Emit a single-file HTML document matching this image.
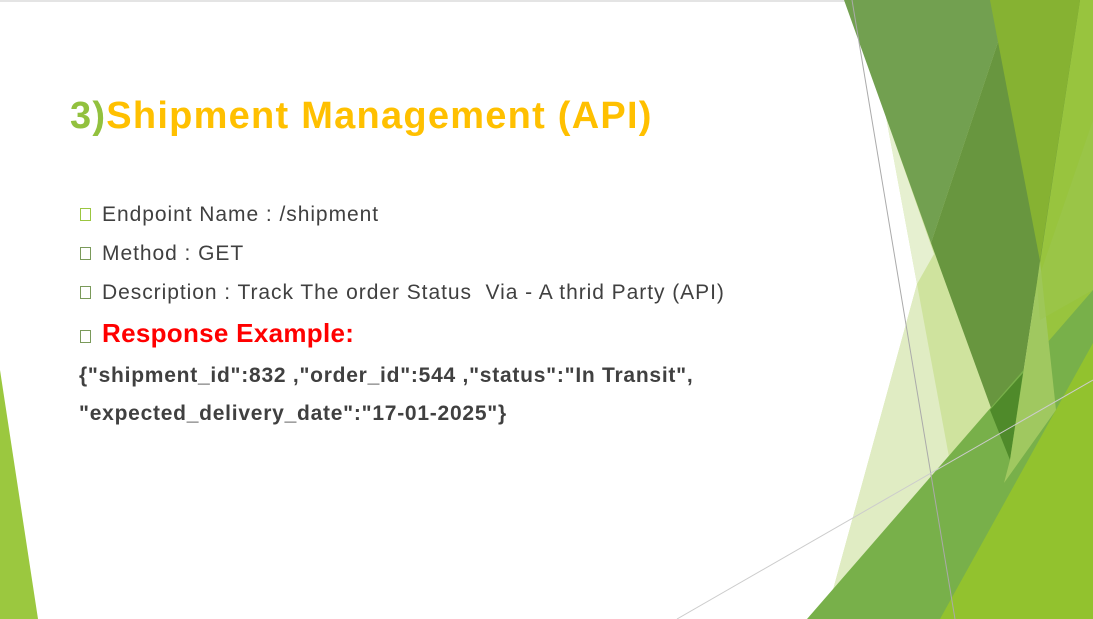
<!DOCTYPE html>
<html><head><meta charset="utf-8"><style>
html,body{margin:0;padding:0}
body{width:1093px;height:619px;position:relative;overflow:hidden;background:#fff;font-family:"Liberation Sans",sans-serif}
svg{position:absolute;left:0;top:0}
.t{position:absolute;white-space:nowrap}
.title{left:70px;top:95px;font-size:38px;font-weight:bold;color:#ffc000;letter-spacing:1.25px}
.b{left:80px;font-size:21px;color:#404040;letter-spacing:0.95px}
.b i{font-style:normal;display:inline-block;width:9px;height:11px;border:1px solid #7a9a5a;margin-right:11px;vertical-align:0px}
.j{left:79px;font-size:21px;font-weight:bold;color:#404040;letter-spacing:0.75px}
</style></head><body>
<svg width="1093" height="619">
<rect x="0" y="0" width="1093" height="2" fill="#e4e4e4"/>
<polygon points="0,370 38,619 0,619" fill="#9bc83f"/>
<polygon points="990,0 1093,0 1093,619 990,619" fill="#98c43e"/>
<polygon points="886,117 1012,0 1060,619 825,619 917,284" fill="#cfe39e"/>
<polygon points="917,284 979,619 825,619" fill="#e0ecc3"/>
<polygon points="886,117 934,254 917,284" fill="#e6f0d0"/>
<polygon points="844,0 1012,0 931,243" fill="#72a050"/>
<polygon points="1012,0 1080,0 1010,460 931,243" fill="#68963f"/>
<polygon points="990,0 1080,0 1040,261" fill="#86b232"/>
<polygon points="807,619 1093,290 1093,619" fill="#78b04a"/>
<polygon points="990,410 1023,373 1010,460" fill="#4f8a2a"/>
<polygon points="1040,261 1056,410 1004,483 1010,460 1037,283" fill="#a0c860"/>
<polygon points="1093,120 1093,290 1040,320 1037,283" fill="#9cc650" opacity="0.5"/>
<polygon points="940,619 1093,343 1093,619" fill="#92c22e"/>
<line x1="852" y1="0" x2="955" y2="619" stroke="#aaa" stroke-width="1"/>
<line x1="677" y1="619" x2="1093" y2="380" stroke="#ccc" stroke-width="1"/>
</svg>
<div class="t title"><span style="color:#92c13e">3)</span>Shipment Management (API)</div>
<div class="t b" style="top:203px"><i style="border-color:#9bc640"></i>Endpoint Name : /shipment</div>
<div class="t b" style="top:242px"><i></i>Method : GET</div>
<div class="t b" style="top:281px"><i></i>Description : Track The order Status&nbsp; Via - A thrid Party (API)</div>
<div class="t b" style="top:318px;font-size:26px;font-weight:bold;color:#ff0000;letter-spacing:0.3px"><i style="vertical-align:-1px"></i>Response Example:</div>
<div class="t j" style="top:364px">{"shipment_id":832 ,"order_id":544 ,"status":"In Transit",</div>
<div class="t j" style="top:402px">"expected_delivery_date":"17-01-2025"}</div>
</body></html>
